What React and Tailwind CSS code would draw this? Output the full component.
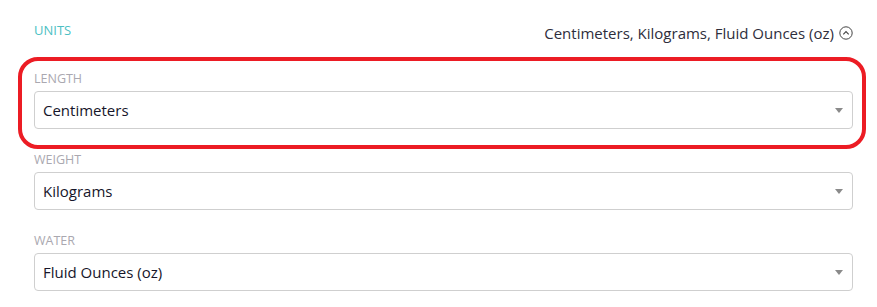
import React from "react";

function Caret() {
  return (
    <svg width="8" height="5" viewBox="0 0 8 5" className="shrink-0">
      <path d="M0 0 L8 0 L4 5 Z" fill="#8a8a8a" />
    </svg>
  );
}

function Field({ label, value, highlight }) {
  return (
    <div className="relative">
      {highlight && (
        <div className="pointer-events-none absolute -left-[16px] -right-[13px] -top-[14px] -bottom-[20px] rounded-[20px] border-[4px] border-[#ec1c24]" />
      )}
      <div className="text-[12.5px] leading-[16px] text-[#aaa8b0] uppercase">{label}</div>
      <div className="mt-[4px] flex h-[38px] items-center justify-between rounded-[4px] border border-[#cfcfcf] bg-white pl-[8px] pr-[9px]">
        <span className="text-[15px] text-[#16162a]">{value}</span>
        <Caret />
      </div>
    </div>
  );
}

export default function App() {
  return (
    <div
      className="h-[307px] w-[877px] overflow-hidden bg-white pl-[34px] pr-[24px] pt-[21px]"
      style={{ fontFamily: '"Open Sans", "Liberation Sans", sans-serif' }}
    >
      <div className="flex items-start justify-between">
        <div className="mt-[1px] text-[13px] leading-[16px] text-[#4dbfc4]">UNITS</div>
        <div className="mt-[2px] flex items-center gap-[5px] text-[15px] leading-[20px] text-[#2e2e3c]">
          <span>Centimeters, Kilograms, Fluid Ounces (oz)</span>
          <svg width="14" height="14" viewBox="0 0 14 14">
            <circle cx="7" cy="7" r="6.2" fill="none" stroke="#444" strokeWidth="1" />
            <path d="M4.3 8.3 L7 5.6 L9.7 8.3" fill="none" stroke="#444" strokeWidth="1.1" />
          </svg>
        </div>
      </div>
      <div className="mt-[28px] flex flex-col gap-[23px]">
        <Field label="Length" value="Centimeters" highlight />
        <Field label="Weight" value="Kilograms" />
        <Field label="Water" value="Fluid Ounces (oz)" />
      </div>
    </div>
  );
}
